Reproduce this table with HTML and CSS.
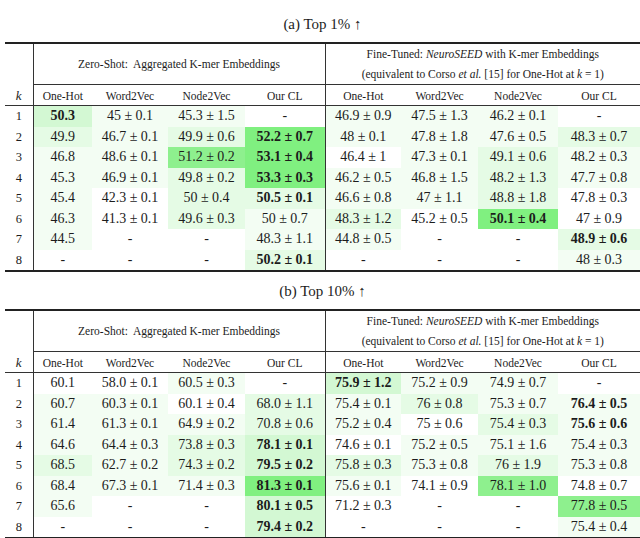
FILE: index.html
```html
<!DOCTYPE html>
<html>
<head>
<meta charset="utf-8">
<link rel="stylesheet" href="styles.css">
</head>
<body>
<div class="page">
  <section class="block">
    <div class="caption">(a) Top 1% ↑</div>
    <table class="results">
      <colgroup>
        <col class="c-k"><col class="c1"><col class="c2"><col class="c3"><col class="c4">
        <col class="c5"><col class="c6"><col class="c7"><col class="c8">
      </colgroup>
      <thead>
        <tr class="groups">
          <th class="kcol" rowspan="2"><span class="mi">k</span></th>
          <th class="grp sep" colspan="4">Zero-Shot:&nbsp; Aggregated K-mer Embeddings</th>
          <th class="grp" colspan="4">Fine-Tuned: <i>NeuroSEED</i> with K-mer Embeddings<br>(equivalent to Corso <i>et al.</i> [15] for One-Hot at <span class="mi">k</span> = 1)</th>
        </tr>
        <tr class="methods">
          <th>One-Hot</th><th>Word2Vec</th><th>Node2Vec</th><th class="sep">Our CL</th>
          <th>One-Hot</th><th>Word2Vec</th><th>Node2Vec</th><th>Our CL</th>
        </tr>
      </thead>
      <tbody>
        <tr><td class="kcol">1</td><td class="g3 b">50.3</td><td class="g1">45 ± 0.1</td><td class="g1">45.3 ± 1.5</td><td class="sep">-</td><td class="g1">46.9 ± 0.9</td><td class="g1">47.5 ± 1.3</td><td class="g1">46.2 ± 0.1</td><td>-</td></tr>
        <tr><td class="kcol">2</td><td class="g2">49.9</td><td class="g1">46.7 ± 0.1</td><td class="g2">49.9 ± 0.6</td><td class="sep g5 b">52.2 ± 0.7</td><td class="g1">48 ± 0.1</td><td class="g1">47.8 ± 1.8</td><td class="g1">47.6 ± 0.5</td><td class="g2">48.3 ± 0.7</td></tr>
        <tr><td class="kcol">3</td><td class="g1">46.8</td><td class="g1">48.6 ± 0.1</td><td class="g4">51.2 ± 0.2</td><td class="sep g5 b">53.1 ± 0.4</td><td>46.4 ± 1</td><td class="g1">47.3 ± 0.1</td><td class="g2">49.1 ± 0.6</td><td class="g1">48.2 ± 0.3</td></tr>
        <tr><td class="kcol">4</td><td class="g1">45.3</td><td class="g1">46.9 ± 0.1</td><td class="g2">49.8 ± 0.2</td><td class="sep g5 b">53.3 ± 0.3</td><td class="g1">46.2 ± 0.5</td><td class="g1">46.8 ± 1.5</td><td class="g2">48.2 ± 1.3</td><td class="g1">47.7 ± 0.8</td></tr>
        <tr><td class="kcol">5</td><td class="g1">45.4</td><td>42.3 ± 0.1</td><td class="g2">50 ± 0.4</td><td class="sep g2 b">50.5 ± 0.1</td><td class="g1">46.6 ± 0.8</td><td class="g1">47 ± 1.1</td><td class="g2">48.8 ± 1.8</td><td>47.8 ± 0.3</td></tr>
        <tr><td class="kcol">6</td><td class="g1">46.3</td><td>41.3 ± 0.1</td><td class="g2">49.6 ± 0.3</td><td class="sep g1">50 ± 0.7</td><td class="g2">48.3 ± 1.2</td><td>45.2 ± 0.5</td><td class="g5 b">50.1 ± 0.4</td><td>47 ± 0.9</td></tr>
        <tr><td class="kcol">7</td><td class="g1">44.5</td><td>-</td><td>-</td><td class="sep g1">48.3 ± 1.1</td><td class="g1">44.8 ± 0.5</td><td>-</td><td>-</td><td class="g2 b">48.9 ± 0.6</td></tr>
        <tr><td class="kcol">8</td><td>-</td><td>-</td><td>-</td><td class="sep g2 b">50.2 ± 0.1</td><td>-</td><td>-</td><td>-</td><td class="g1">48 ± 0.3</td></tr>
      </tbody>
    </table>
  </section>

  <section class="block">
    <div class="caption">(b) Top 10% ↑</div>
    <table class="results">
      <colgroup>
        <col class="c-k"><col class="c1"><col class="c2"><col class="c3"><col class="c4">
        <col class="c5"><col class="c6"><col class="c7"><col class="c8">
      </colgroup>
      <thead>
        <tr class="groups">
          <th class="kcol" rowspan="2"><span class="mi">k</span></th>
          <th class="grp sep" colspan="4">Zero-Shot:&nbsp; Aggregated K-mer Embeddings</th>
          <th class="grp" colspan="4">Fine-Tuned: <i>NeuroSEED</i> with K-mer Embeddings<br>(equivalent to Corso <i>et al.</i> [15] for One-Hot at <span class="mi">k</span> = 1)</th>
        </tr>
        <tr class="methods">
          <th>One-Hot</th><th>Word2Vec</th><th>Node2Vec</th><th class="sep">Our CL</th>
          <th>One-Hot</th><th>Word2Vec</th><th>Node2Vec</th><th>Our CL</th>
        </tr>
      </thead>
      <tbody>
        <tr><td class="kcol">1</td><td>60.1</td><td>58.0 ± 0.1</td><td class="g1">60.5 ± 0.3</td><td class="sep">-</td><td class="g3 b">75.9 ± 1.2</td><td class="g1">75.2 ± 0.9</td><td class="g1">74.9 ± 0.7</td><td>-</td></tr>
        <tr><td class="kcol">2</td><td class="g1">60.7</td><td class="g1">60.3 ± 0.1</td><td>60.1 ± 0.4</td><td class="sep g2">68.0 ± 1.1</td><td class="g1">75.4 ± 0.1</td><td class="g2">76 ± 0.8</td><td class="g1">75.3 ± 0.7</td><td class="g1 b">76.4 ± 0.5</td></tr>
        <tr><td class="kcol">3</td><td class="g1">61.4</td><td class="g1">61.3 ± 0.1</td><td class="g1">64.9 ± 0.2</td><td class="sep g2">70.8 ± 0.6</td><td class="g1">75.2 ± 0.4</td><td>75 ± 0.6</td><td class="g2">75.4 ± 0.3</td><td class="g1 b">75.6 ± 0.6</td></tr>
        <tr><td class="kcol">4</td><td class="g1">64.6</td><td class="g1">64.4 ± 0.3</td><td class="g2">73.8 ± 0.3</td><td class="sep g3 b">78.1 ± 0.1</td><td>74.6 ± 0.1</td><td class="g1">75.2 ± 0.5</td><td class="g1">75.1 ± 1.6</td><td class="g1">75.4 ± 0.3</td></tr>
        <tr><td class="kcol">5</td><td class="g2">68.5</td><td class="g1">62.7 ± 0.2</td><td class="g2">74.3 ± 0.2</td><td class="sep g3 b">79.5 ± 0.2</td><td class="g2">75.8 ± 0.3</td><td class="g1">75.3 ± 0.8</td><td class="g2">76 ± 1.9</td><td class="g1">75.3 ± 0.8</td></tr>
        <tr><td class="kcol">6</td><td class="g1">68.4</td><td class="g1">67.3 ± 0.1</td><td class="g1">71.4 ± 0.3</td><td class="sep g5 b">81.3 ± 0.1</td><td class="g1">75.6 ± 0.1</td><td>74.1 ± 0.9</td><td class="g4">78.1 ± 1.0</td><td>74.8 ± 0.7</td></tr>
        <tr><td class="kcol">7</td><td class="g1">65.6</td><td>-</td><td>-</td><td class="sep g3 b">80.1 ± 0.5</td><td>71.2 ± 0.3</td><td>-</td><td>-</td><td class="g4">77.8 ± 0.5</td></tr>
        <tr><td class="kcol">8</td><td>-</td><td>-</td><td>-</td><td class="sep g3 b">79.4 ± 0.2</td><td>-</td><td>-</td><td>-</td><td class="g1">75.4 ± 0.4</td></tr>
      </tbody>
    </table>
  </section>
</div>
</body>
</html>
```
FILE: styles.css
```css
html, body {
  margin: 0;
  padding: 0;
  background: #ffffff;
}

body {
  color: #1c1c1c;
  font-family: "Liberation Serif", "Times New Roman", serif;
}

.page {
  padding: 14px 0 0 5px;
}

.block + .block {
  margin-top: 9px;
}

.caption {
  width: 635px;
  text-align: center;
  font-size: 15px;
  line-height: 20px;
  margin-bottom: 8px;
}

.results {
  width: 635px;
  border-collapse: collapse;
  table-layout: fixed;
  border-top: 2px solid #222;
  border-bottom: 2px solid #222;
}

.c-k { width: 28px; }
.c1 { width: 59px; }
.c2 { width: 76px; }
.c3 { width: 77px; }
.c4 { width: 80px; }
.c5 { width: 76px; }
.c6 { width: 77px; }
.c7 { width: 80px; }
.c8 { width: 82px; }

.results th,
.results td {
  padding: 0;
  text-align: center;
  white-space: nowrap;
  overflow: hidden;
}

.results th {
  font-weight: normal;
  font-size: 11.5px;
}

.groups th {
  height: 40px;
  line-height: 20px;
  vertical-align: middle;
  border-bottom: 1px solid #333;
}

.methods th {
  height: 18px;
  line-height: 18px;
  padding-top: 2px;
  border-bottom: 1px solid #333;
}

.results th.kcol {
  vertical-align: bottom;
  padding-bottom: 0;
  line-height: 18px;
  font-size: 13px;
  border-bottom: 1px solid #333;
}

.kcol {
  border-right: 1px solid #333;
}

.sep {
  border-right: 1px solid #333;
}

.mi {
  font-style: italic;
}

.results td {
  height: 20.5px;
  font-size: 14px;
  line-height: 20px;
}

.results td.kcol {
  font-size: 12.5px;
}

.b {
  font-weight: bold;
}

.g1 { background: #f3fdf3; }
.g2 { background: #e5fbe5; }
.g3 { background: #d3f8d3; }
.g4 { background: #8ef08e; }
.g5 { background: #80f080; }
```
